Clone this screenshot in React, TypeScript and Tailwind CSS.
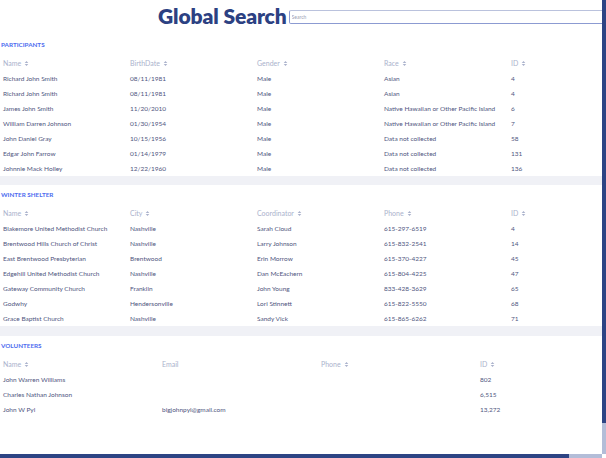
const participants = [
  ["Richard John Smith", "08/11/1981", "Male", "Asian", "4"],
  ["Richard John Smith", "08/11/1981", "Male", "Asian", "4"],
  ["James John Smith", "11/20/2010", "Male", "Native Hawaiian or Other Pacific Island", "6"],
  ["William Darren Johnson", "01/30/1954", "Male", "Native Hawaiian or Other Pacific Island", "7"],
  ["John Daniel Gray", "10/15/1956", "Male", "Data not collected", "58"],
  ["Edgar John Farrow", "01/14/1979", "Male", "Data not collected", "131"],
  ["Johnnie Mack Holley", "12/22/1960", "Male", "Data not collected", "136"],
];

const shelters = [
  ["Blakemore United Methodist Church", "Nashville", "Sarah Cloud", "615-297-6519", "4"],
  ["Brentwood Hills Church of Christ", "Nashville", "Larry Johnson", "615-832-2541", "14"],
  ["East Brentwood Presbyterian", "Brentwood", "Erin Morrow", "615-370-4227", "45"],
  ["Edgehill United Methodist Church", "Nashville", "Dan McEachern", "615-804-4225", "47"],
  ["Gateway Community Church", "Franklin", "John Young", "833-428-3629", "65"],
  ["Godwhy", "Hendersonville", "Lori Stinnett", "615-822-5550", "68"],
  ["Grace Baptist Church", "Nashville", "Sandy Vick", "615-865-6262", "71"],
];

const volunteers = [
  ["John Warren Williams", "", "", "802"],
  ["Charles Nathan Johnson", "", "", "6,515"],
  ["John W Pyl", "bigjohnpyl@gmail.com", "", "13,272"],
];

function SortIcon() {
  return (
    <svg width="5" height="7" viewBox="0 0 5 7" className="ml-[3px]">
      <path d="M0.7 2.9 L2.5 1 L4.3 2.9 Z" fill="#aab2cc" />
      <path d="M0.7 4.1 L2.5 6 L4.3 4.1 Z" fill="#aab2cc" />
    </svg>
  );
}

type Col = { label: string; sort: boolean };

function Section({
  title,
  cols,
  rows,
  colW,
}: {
  title: string;
  cols: Col[];
  rows: string[][];
  colW: string;
}) {
  return (
    <div>
      <div className="h-[20px] flex items-center pl-px text-[6.3px] font-bold text-[#4d6cef]">
        {title}
      </div>
      <div className="flex h-[16px] items-center text-[7px]">
        {cols.map((c) => (
          <div key={c.label} className={`${colW} pl-[3px] flex items-center text-[#aab2cc]`}>
            <span>{c.label}</span>
            {c.sort && <SortIcon />}
          </div>
        ))}
      </div>
      {rows.map((r, i) => (
        <div key={i} className="flex h-[15px] items-center">
          {r.map((v, j) => (
            <div key={j} className={`${colW} pl-[3px] whitespace-nowrap text-[#4f5680]`}>
              {v}
            </div>
          ))}
        </div>
      ))}
    </div>
  );
}

export default function App() {
  return (
    <div className="w-[606px] h-[458px] flex flex-col overflow-hidden bg-white font-['Lato',sans-serif]">
      <div className="flex flex-1 min-h-0">
        <div className="flex-1 overflow-hidden">
          <div className="w-[637px] text-[6.5px]">
            <div className="h-[35px] flex items-start pt-[5px] pl-[158px]">
              <h1 className="text-[21px] leading-[22px] font-extrabold text-[#2c4182] tracking-[-0.1px] whitespace-nowrap">
                Global Search
              </h1>
              <input
                placeholder="Search"
                className="ml-[2px] mt-[5px] w-[330px] h-[14px] shrink-0 border border-[#8c9bd2] border-t-[#bac2dd] rounded-l-[2px] px-[2px] text-[5px] placeholder:text-[#9aa0b4] outline-none"
              />
            </div>
            <Section
              title="PARTICIPANTS"
              colW="w-[127px]"
              cols={[
                { label: "Name", sort: true },
                { label: "BirthDate", sort: true },
                { label: "Gender", sort: true },
                { label: "Race", sort: true },
                { label: "ID", sort: true },
              ]}
              rows={participants}
            />
            <div className="h-[9px] bg-[#f0f1f6]" />
            <Section
              title="WINTER SHELTER"
              colW="w-[127px]"
              cols={[
                { label: "Name", sort: true },
                { label: "City", sort: true },
                { label: "Coordinator", sort: true },
                { label: "Phone", sort: true },
                { label: "ID", sort: true },
              ]}
              rows={shelters}
            />
            <div className="h-[10px] bg-[#f0f1f6]" />
            <Section
              title="VOLUNTEERS"
              colW="w-[159px]"
              cols={[
                { label: "Name", sort: true },
                { label: "Email", sort: false },
                { label: "Phone", sort: true },
                { label: "ID", sort: true },
              ]}
              rows={volunteers}
            />
          </div>
        </div>
        <div className="w-[4px] flex flex-col">
          <div className="h-[423px] bg-[#2d4484]" />
          <div className="flex-1 bg-[#b3bdd8]" />
        </div>
      </div>
      <div className="h-[4px] flex">
        <div className="w-[569px] bg-[#2d4484]" />
        <div className="w-[33px] bg-[#b3bdd8]" />
        <div className="w-[4px] bg-white" />
      </div>
    </div>
  );
}
